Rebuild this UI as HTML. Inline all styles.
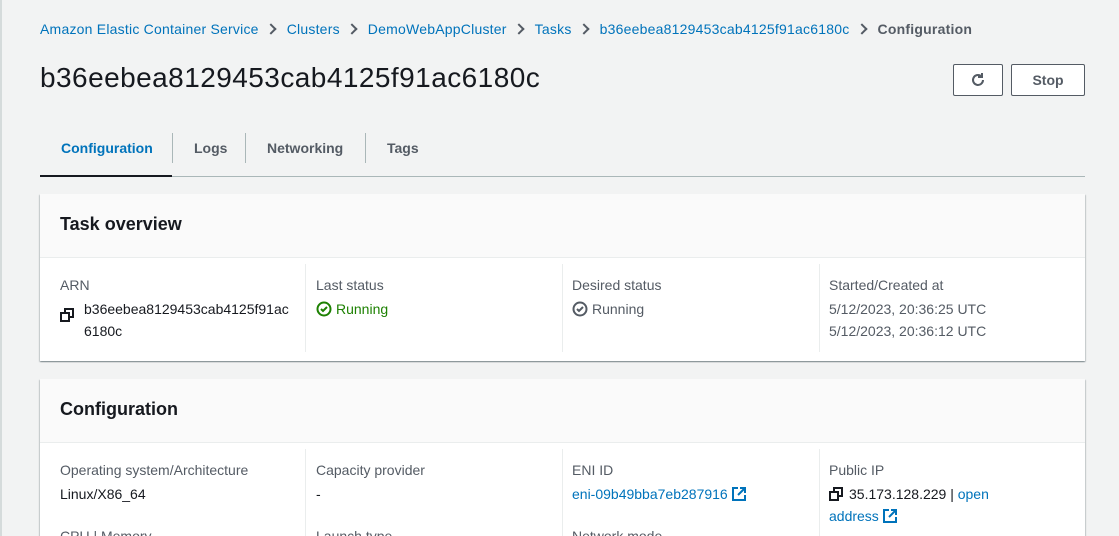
<!DOCTYPE html>
<html style="overflow:hidden;height:536px"><head><style>
*{box-sizing:border-box;margin:0;padding:0}
body{width:1119px;height:536px;overflow:hidden;background:#f2f3f3;font-family:"Liberation Sans",sans-serif;font-size:14px;color:#16191f;position:relative;border-left:2px solid #d5dbdb}
.a{position:absolute;white-space:nowrap}
.link{color:#0073bb}
.bc{top:21px;left:38px;font-size:14px;color:#0073bb;letter-spacing:0.22px}
.bc .s{display:inline-block;width:8px;height:8px;border-right:2px solid #545b64;border-top:2px solid #545b64;transform:rotate(45deg);margin:0 12px 1px 8px}
.card{position:absolute;left:38px;width:1045px;background:#fff;box-shadow:0 1px 1px 0 rgba(0,28,36,.3),1px 1px 1px 0 rgba(0,28,36,.15),-1px 1px 1px 0 rgba(0,28,36,.15);overflow:hidden}
.hd{height:64px;background:#fafafa;border-bottom:1px solid #eaeded;font-size:18px;font-weight:bold;padding:20px 20px}
.col{position:absolute;top:84px;width:240px}
.lab{color:#545b64;line-height:22px}
.val{line-height:22px;margin-top:2px}
.dv{position:absolute;width:1px;background:#eaeded}
.btn{position:absolute;border:1px solid #545b64;border-radius:2px;background:#fff;top:64px;height:32px;font-weight:bold;color:#545b64;text-align:center;line-height:30px}
.tab{position:absolute;top:140px;font-weight:bold;color:#545b64}
.sep{position:absolute;top:133px;width:1px;height:30px;background:#aab7b8}
</style></head><body>
<div class="a bc">Amazon Elastic Container Service<span class="s"></span>Clusters<span class="s"></span>DemoWebAppCluster<span class="s"></span>Tasks<span class="s"></span>b36eebea8129453cab4125f91ac6180c<span class="s"></span><b style="color:#545b64">Configuration</b></div>
<div class="a" style="top:62px;left:38px;font-size:28px;color:#16191f;letter-spacing:0.45px">b36eebea8129453cab4125f91ac6180c</div>
<div class="btn" style="left:951px;width:50px"><svg width="16" height="16" viewBox="0 0 16 16" style="margin-top:7px" fill="none" stroke="#545b64" stroke-width="2"><path d="M13 8a5 5 0 1 1-2-4"/><path d="M12 1v4H8"/></svg></div>
<div class="btn" style="left:1009px;width:74px">Stop</div>
<div class="tab" style="left:59px;color:#0073bb">Configuration</div>
<div class="sep" style="left:170px"></div>
<div class="tab" style="left:192px">Logs</div>
<div class="sep" style="left:243px"></div>
<div class="tab" style="left:265px">Networking</div>
<div class="sep" style="left:363px"></div>
<div class="tab" style="left:385px">Tags</div>
<div class="a" style="top:176px;left:38px;width:1045px;height:1px;background:#aab7b8"></div>
<div class="a" style="top:175px;left:38px;width:132px;height:2px;background:#16191f"></div>

<div class="card" style="top:194px;height:167px">
<div class="hd">Task overview</div>
<div class="dv" style="left:265px;top:70px;height:88px"></div>
<div class="dv" style="left:522px;top:70px;height:88px"></div>
<div class="dv" style="left:779px;top:70px;height:88px"></div>
<div class="col" style="left:20px;top:80px"><div class="lab">ARN</div>
<div class="val" style="padding-left:24px;position:relative">b36eebea8129453cab4125f91ac<br>6180c<svg style="position:absolute;left:0;top:10px" width="14" height="14" viewBox="0 0 14 14" fill="none" stroke="#16191f" stroke-width="2"><rect x="1" y="5" width="8" height="8"/><path d="M5 5V1h8v8H9"/></svg></div></div>
<div class="col" style="left:276px;top:80px"><div class="lab">Last status</div><div class="val" style="color:#1d8102"><svg width="16" height="16" viewBox="0 0 16 16" style="vertical-align:-3px;margin-right:4px" fill="none" stroke="#1d8102" stroke-width="2"><circle cx="8" cy="8" r="6.5"/><path d="M5 8l2 2 4-4"/></svg>Running</div></div>
<div class="col" style="left:532px;top:80px"><div class="lab">Desired status</div><div class="val" style="color:#545b64"><svg width="16" height="16" viewBox="0 0 16 16" style="vertical-align:-3px;margin-right:4px" fill="none" stroke="#545b64" stroke-width="2"><circle cx="8" cy="8" r="6.5"/><path d="M5 8l2 2 4-4"/></svg>Running</div></div>
<div class="col" style="left:789px;top:80px"><div class="lab">Started/Created at</div><div class="val" style="color:#545b64">5/12/2023, 20:36:25 UTC<br>5/12/2023, 20:36:12 UTC</div></div>
</div>

<div class="card" style="top:379px;height:157px">
<div class="hd">Configuration</div>
<div class="dv" style="left:265px;top:70px;height:90px"></div>
<div class="dv" style="left:522px;top:70px;height:90px"></div>
<div class="dv" style="left:779px;top:70px;height:90px"></div>
<div class="col" style="left:20px;top:80px"><div class="lab">Operating system/Architecture</div><div class="val">Linux/X86_64</div><div class="lab" style="margin-top:20px">CPU | Memory</div></div>
<div class="col" style="left:276px;top:80px"><div class="lab">Capacity provider</div><div class="val">-</div><div class="lab" style="margin-top:20px">Launch type</div></div>
<div class="col" style="left:532px;top:80px"><div class="lab">ENI ID</div><div class="val link">eni-09b49bba7eb287916 <svg width="14" height="14" viewBox="0 0 14 14" style="vertical-align:-2px" fill="none" stroke="#0073bb" stroke-width="2"><path d="M6 1H1v12h12V8"/><path d="M8 1h5v5M13 1L6 8"/></svg></div><div class="lab" style="margin-top:20px">Network mode</div></div>
<div class="col" style="left:789px;top:80px"><div class="lab">Public IP</div><div class="val"><svg width="14" height="14" viewBox="0 0 14 14" style="vertical-align:-2px;margin-right:6px" fill="none" stroke="#16191f" stroke-width="2"><rect x="1" y="5" width="8" height="8"/><path d="M5 5V1h8v8H9"/></svg>35.173.128.229 | <span class="link">open</span><br><span class="link">address <svg width="14" height="14" viewBox="0 0 14 14" style="vertical-align:-2px" fill="none" stroke="#0073bb" stroke-width="2"><path d="M6 1H1v12h12V8"/><path d="M8 1h5v5M13 1L6 8"/></svg></span></div></div>
</div>
</body></html>
